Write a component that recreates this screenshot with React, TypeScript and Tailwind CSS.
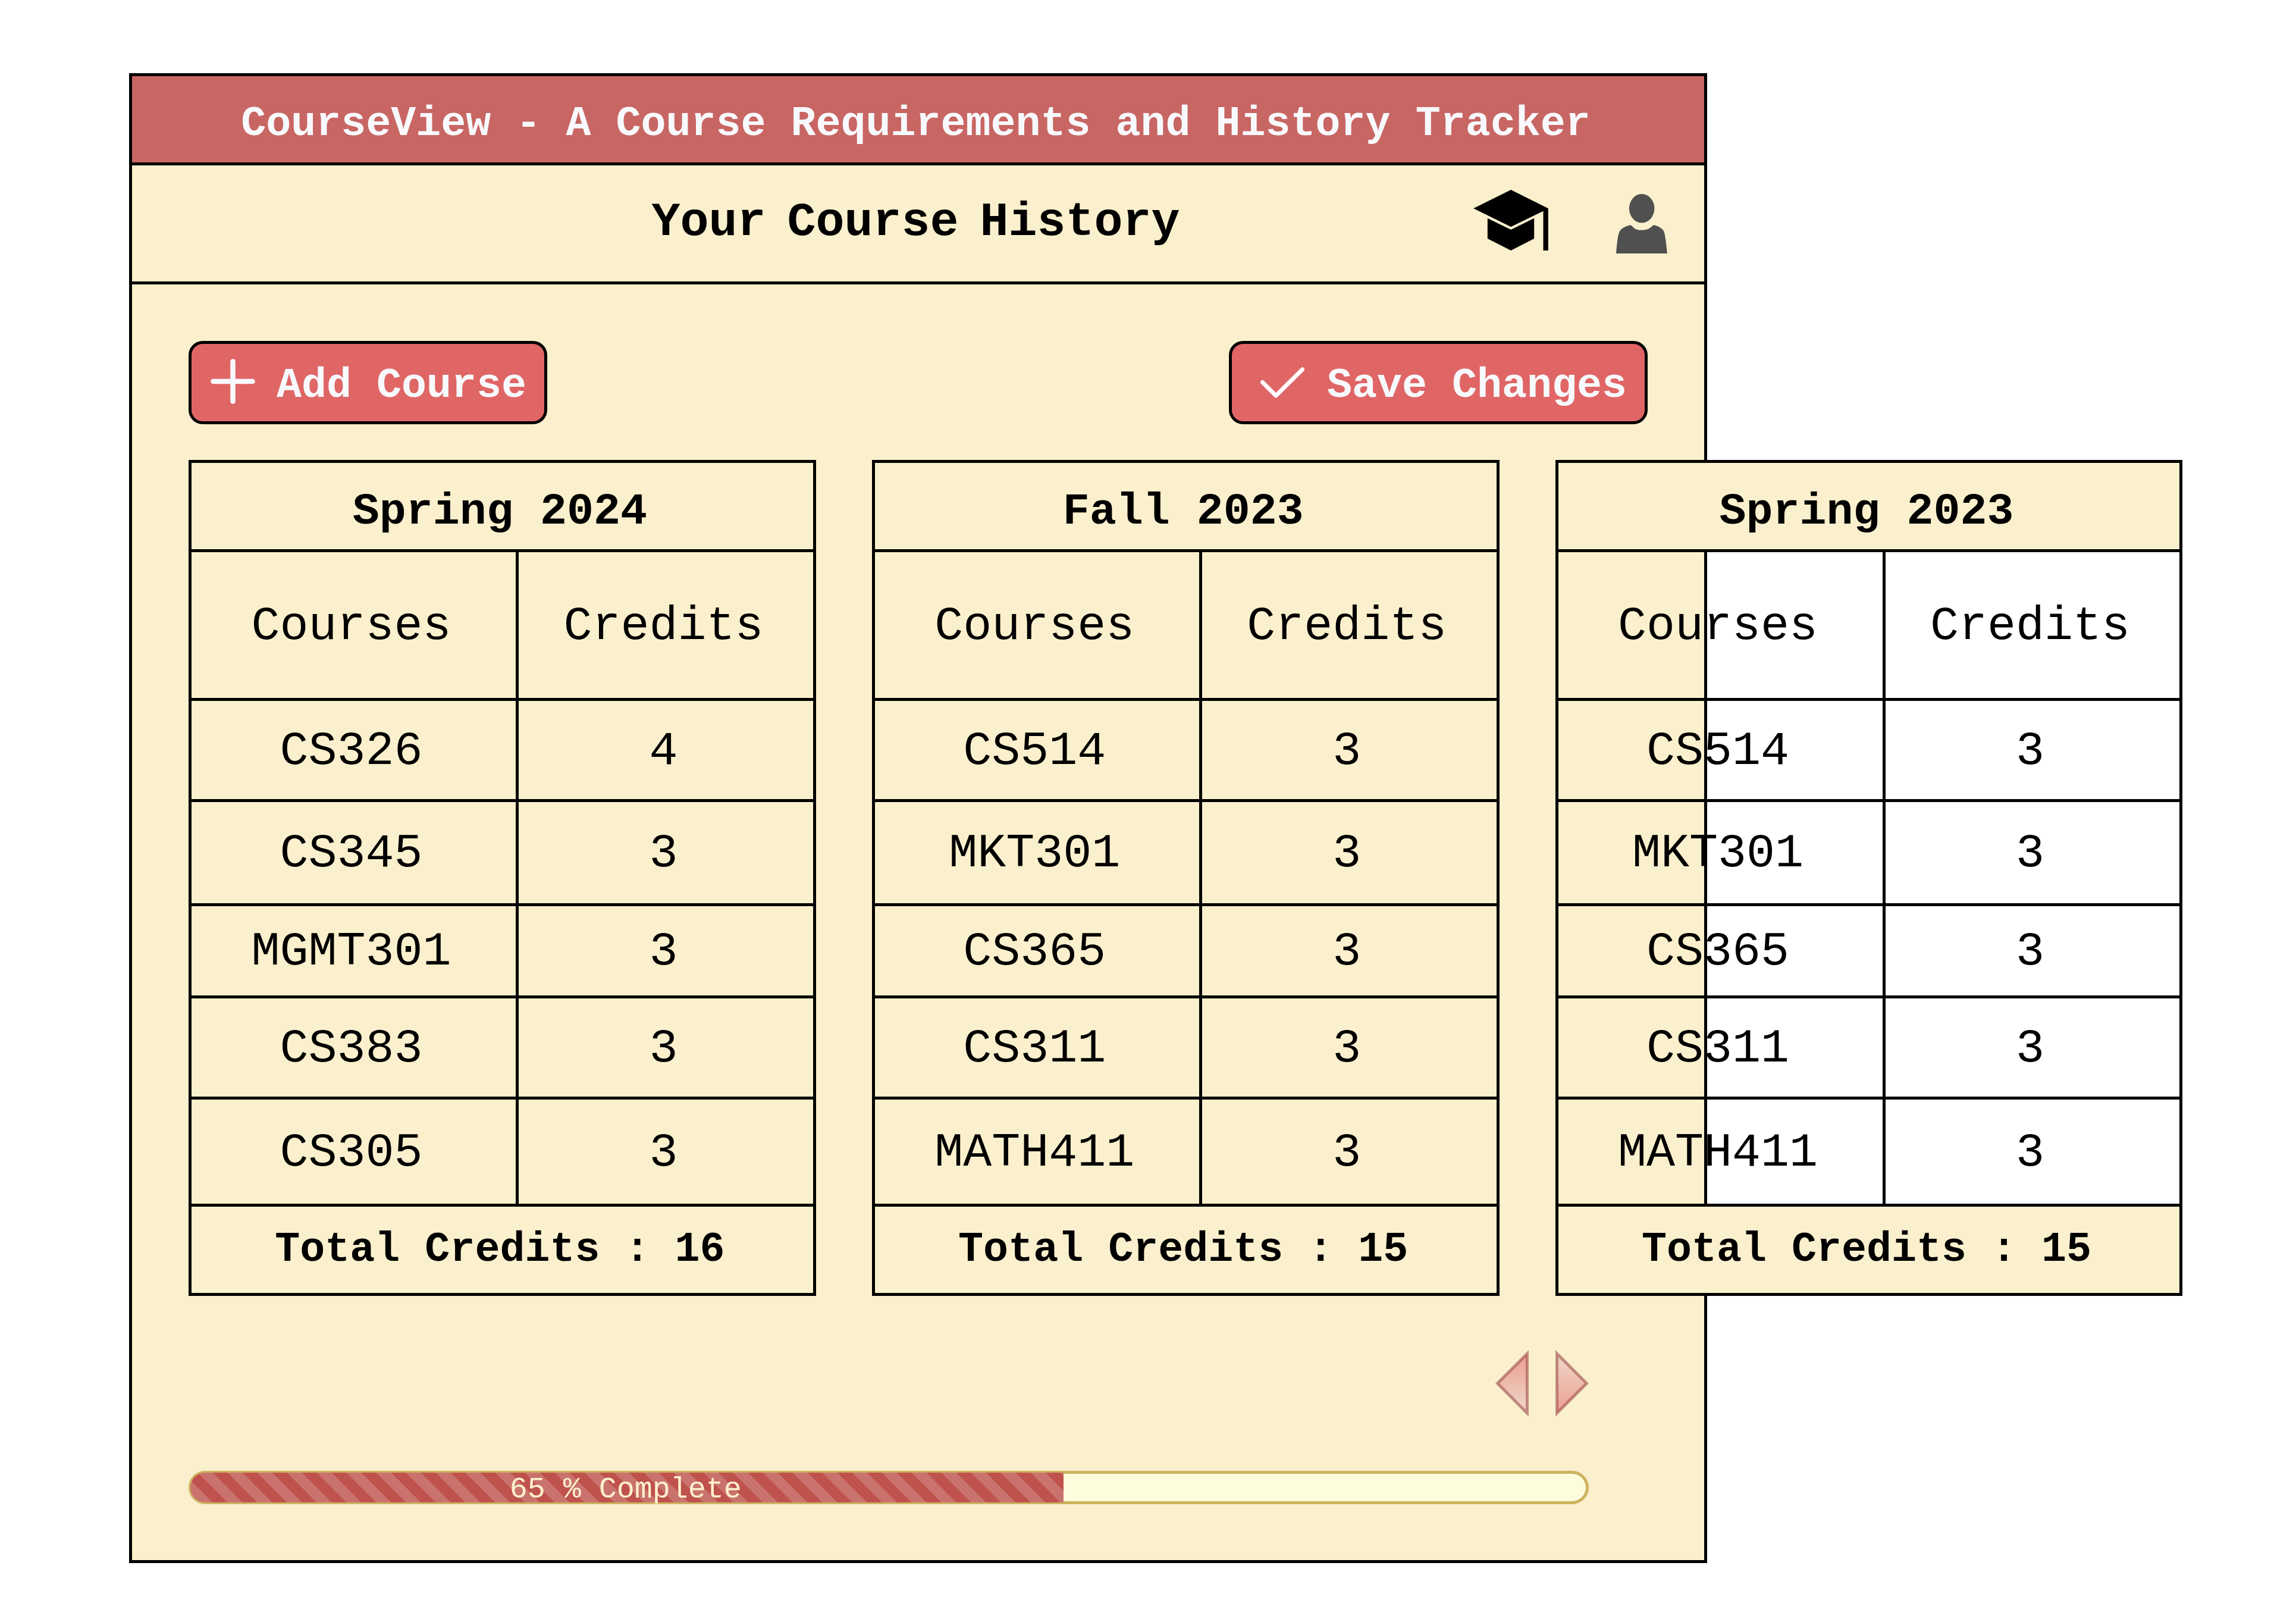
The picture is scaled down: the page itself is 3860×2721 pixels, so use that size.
import React from "react";

type Course = { code: string; credits: number };
type Semester = { name: string; courses: Course[]; total: number };

const semesters: Semester[] = [
  {
    name: "Spring 2024",
    courses: [
      { code: "CS326", credits: 4 },
      { code: "CS345", credits: 3 },
      { code: "MGMT301", credits: 3 },
      { code: "CS383", credits: 3 },
      { code: "CS305", credits: 3 },
    ],
    total: 16,
  },
  {
    name: "Fall 2023",
    courses: [
      { code: "CS514", credits: 3 },
      { code: "MKT301", credits: 3 },
      { code: "CS365", credits: 3 },
      { code: "CS311", credits: 3 },
      { code: "MATH411", credits: 3 },
    ],
    total: 15,
  },
  {
    name: "Spring 2023",
    courses: [
      { code: "CS514", credits: 3 },
      { code: "MKT301", credits: 3 },
      { code: "CS365", credits: 3 },
      { code: "CS311", credits: 3 },
      { code: "MATH411", credits: 3 },
    ],
    total: 15,
  },
];

const rowHeights = ["h-[170px]", "h-[175px]", "h-[155px]", "h-[170px]", "h-[180px]"];

function SemesterTable({ semester }: { semester: Semester }) {
  return (
    <table className="w-full table-fixed border-collapse text-center text-[80px] leading-none">
      <colgroup>
        <col className="w-[52.4%]" />
        <col />
      </colgroup>
      <thead>
        <tr className="h-[150px]">
          <th
            colSpan={2}
            scope="colgroup"
            className="border-5 border-black bg-[#FBF0CD] pt-5 pr-2 text-[75px] font-bold"
          >
            {semester.name}
          </th>
        </tr>
        <tr className="h-[250px]">
          <th scope="col" className="border-5 border-black pt-1 pr-2 font-normal">
            Courses
          </th>
          <th scope="col" className="border-5 border-black pt-1 pr-2 font-normal">
            Credits
          </th>
        </tr>
      </thead>
      <tbody>
        {semester.courses.map((course, i) => (
          <tr key={course.code} className={rowHeights[i]}>
            <td className="border-5 border-black pt-1 pr-2">{course.code}</td>
            <td className="border-5 border-black pt-1 pr-2">{course.credits}</td>
          </tr>
        ))}
      </tbody>
      <tfoot>
        <tr className="h-[150px]">
          <td
            colSpan={2}
            className="border-5 border-black bg-[#FBF0CD] pr-2 text-[70px] font-bold"
          >
            Total Credits : {semester.total}
          </td>
        </tr>
      </tfoot>
    </table>
  );
}

function GraduationCap() {
  return (
    <svg viewBox="232 113 377 306" className="h-[102px] w-[126px]" aria-hidden="true">
      <path d="M232 207 421 113 609 207V419H584V220L421 300Z" />
      <path d="M303 256 421 314 538 256V359L421 419 303 359Z" />
    </svg>
  );
}

function Person() {
  return (
    <svg viewBox="951 135 259 301" className="h-[100px] w-[86px]" fill="#505050" aria-hidden="true">
      <ellipse cx="1081" cy="208" rx="64" ry="73" />
      <path d="M951 436C955 390 958 350 967 328C975 308 1000 298 1020 293Q1026 291 1032 298C1045 312 1055 318 1081 318C1108 318 1120 311 1134 297Q1140 291 1147 293C1170 300 1187 310 1194 327C1201 350 1205 395 1210 436Z" />
    </svg>
  );
}

function Arrow({ direction }: { direction: "left" | "right" }) {
  const left = direction === "left";
  const id = `arrow-${direction}`;
  return (
    <svg viewBox="0 0 56 112" className="h-[112px] w-[56px]" aria-hidden="true">
      <defs>
        <linearGradient id={id} x1="0" y1={left ? "0" : "1"} x2="0" y2={left ? "1" : "0"}>
          <stop offset="0" stopColor="#EB9D8D" />
          <stop offset="1" stopColor="#F0D9CC" />
        </linearGradient>
      </defs>
      <path
        d={left ? "M53.500 6V106L3.500 56Z" : "M2.500 6V106L52.500 56Z"}
        fill={`url(#${id})`}
        stroke="#9C4D4D"
        strokeOpacity="0.6"
        strokeWidth="5"
      />
    </svg>
  );
}

export default function App() {
  return (
    <div className="min-h-screen bg-white pt-[123px] pr-[990px] pb-[94px] pl-[217px] font-['Courier_New','Liberation_Mono',monospace] text-black">
      <main className="border-5 border-black bg-[#FBF0CD]">
        <header>
          <div className="flex h-[150px] items-center justify-center border-b-5 border-black bg-[#C86664] pt-4 pr-2">
            <h1 className="text-[70px] leading-none font-bold whitespace-nowrap text-[#F8F9FC]">
              CourseView - A Course Requirements and History Tracker
            </h1>
          </div>
          <div className="grid h-[200px] grid-cols-[1fr_auto_1fr] items-center border-b-5 border-black">
            <span />
            <h2 className="pr-2 pb-1 text-[80px] leading-none font-bold whitespace-nowrap">
              Your<span className="text-[60px]"> </span>Course
              <span className="text-[60px]"> </span>History
            </h2>
            <nav className="flex items-center justify-end gap-[114px] pr-[62px]">
              <a href="#degree" aria-label="Degree requirements" className="pb-3">
                <GraduationCap />
              </a>
              <a href="#profile" aria-label="Profile">
                <Person />
              </a>
            </nav>
          </div>
        </header>

        <div className="px-[95px] pt-[95px] pb-[93px]">
          <div className="flex justify-between text-[70px] leading-none font-bold text-[#F8F9FC]">
            <button
              type="button"
              className="flex h-[140px] items-center gap-[36px] rounded-3xl border-5 border-black bg-[#E06666] pr-[30px] pl-8"
            >
              <svg
                viewBox="0 0 75 76"
                className="mb-1 h-[76px] w-[75px]"
                stroke="currentColor"
                strokeWidth="8.500"
                strokeLinecap="round"
                aria-hidden="true"
              >
                <path d="M37.500 4.500V71.500M4.500 38H70.500" />
              </svg>
              <span className="pt-3">Add Course</span>
            </button>
            <button
              type="button"
              className="flex h-[140px] items-center gap-[38px] rounded-3xl border-5 border-black bg-[#E06666] pr-[30px] pl-12"
            >
              <svg
                viewBox="0 0 74 52"
                className="h-[52px] w-[74px]"
                fill="none"
                stroke="white"
                strokeWidth="7"
                strokeLinecap="round"
                strokeLinejoin="round"
                aria-hidden="true"
              >
                <path d="M3.500 25.500 26 48 70.500 4" />
              </svg>
              <span className="pt-3">Save Changes</span>
            </button>
          </div>

          <div className="mt-[60px] grid auto-cols-[43%] grid-flow-col gap-[94px]">
            {semesters.map((semester) => (
              <SemesterTable key={semester.name} semester={semester} />
            ))}
          </div>

          <div className="pr-[99px]">
            <div className="mt-[91px] flex justify-end gap-[45px]">
              <button type="button" aria-label="Previous semesters">
                <Arrow direction="left" />
              </button>
              <button type="button" aria-label="Next semesters">
                <Arrow direction="right" />
              </button>
            </div>

            <div
              role="progressbar"
              aria-label="Degree progress"
              aria-valuenow={65}
              aria-valuemin={0}
              aria-valuemax={100}
              className="mt-[91px] mb-[1px] flex h-14 rounded-full border-3 border-[#CDB35F] bg-[#CDB35F]"
            >
              <div className="flex w-[62.5%] items-center justify-center rounded-l-full bg-[#BF524C] bg-[linear-gradient(45deg,#CA736E_25%,transparent_25%,transparent_50%,#CA736E_50%,#CA736E_75%,transparent_75%)] bg-[size:50px_50px] bg-[position:13px_0px] pt-2 pr-1 text-[50px] leading-none text-[#FBF0CD]">
                65 % Complete
              </div>
              <div className="flex-1 rounded-r-full border-y-2 border-r-2 border-[#CDB35F] bg-[#FDFCDC]" />
            </div>
          </div>
        </div>
      </main>
    </div>
  );
}
